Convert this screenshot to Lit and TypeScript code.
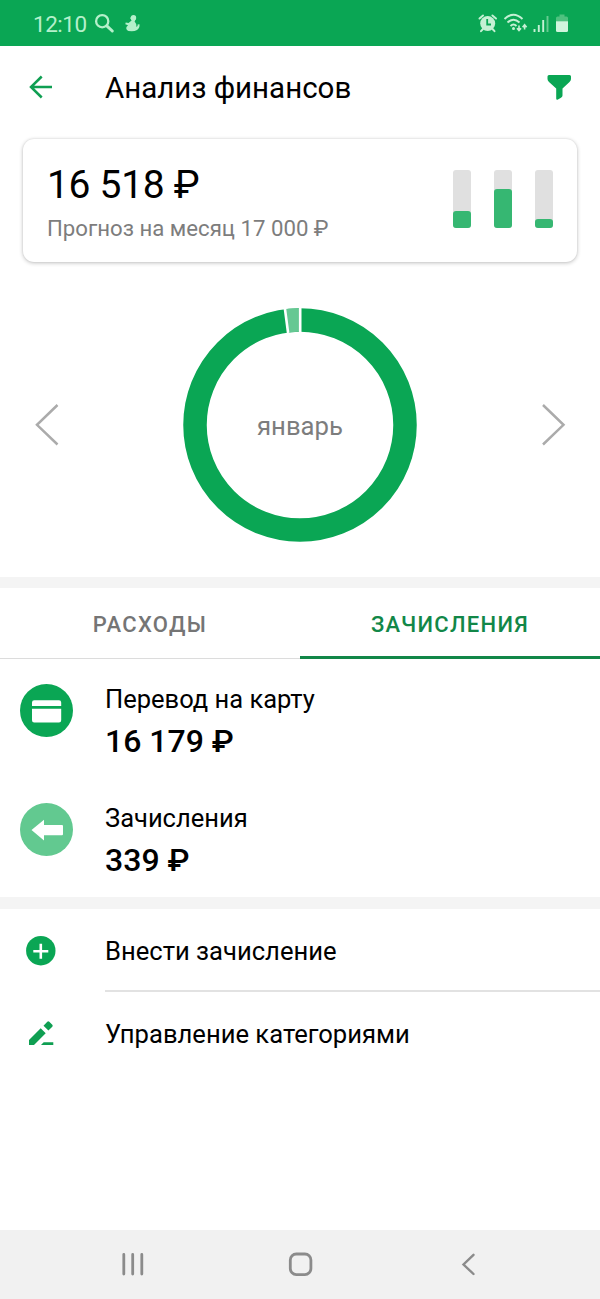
import { LitElement, html, svg, css } from "lit";
import { customElement } from "lit/decorators.js";

const BARS = [17, 39, 9];

@customElement("status-bar")
class StatusBar extends LitElement {
  static styles = css`
    :host { display: flex; height: 46px; background: #0aa654; color: #b5f0cb; align-items: center; }
    .time { font-size: 22.5px; letter-spacing: -0.5px; line-height: 46px; width: 61px; padding-left: 33px; padding-top: 2px; white-space: nowrap; }
    svg { display: block; }
    .right { margin-left: auto; }
  `;
  render() {
    return html`
      <div class="time">12:10</div>
      <svg width="50" height="46" viewBox="94 0 50 46">
        <circle cx="102.200" cy="21.200" r="6.100" fill="none" stroke="#b5f0cb" stroke-width="2.300" />
        <path d="M106.800 25.800 L112.300 31" stroke="#b5f0cb" stroke-width="3" stroke-linecap="round" />
        <circle cx="133.500" cy="17.700" r="2.700" fill="#b5f0cb" />
        <path d="M130 17.800 L134 16.800 L135.800 19 L134.600 21.500 Q137 24 136.500 27 Q138 26.500 137.600 24.600 L139.500 24.300 Q140 28.500 136.500 30.300 Q134.500 31.500 128.500 31 Q125.500 29.500 126.500 27 L128 25.300 L125.300 24.300 L125.700 22.500 L128.500 22.900 L131.600 20.500 Z" fill="#b5f0cb" />
      </svg>
      <svg class="right" width="140" height="46" viewBox="460 0 140 46">
        <circle cx="487.700" cy="23.500" r="7.500" fill="#c5f0d4" />
        <path d="M487.200 19 V24.500 H491" fill="none" stroke="#0aa654" stroke-width="1.800" />
        <path d="M479.500 18.500 L483 15.500 M492.400 15.500 L496 18.500 M483 29 L481 31.200 M492.500 29 L494.500 31.200" stroke="#c5f0d4" stroke-width="2" stroke-linecap="round" />
        <g fill="none" stroke="#c5f0d4" stroke-width="1.900">
          <path d="M504.500 19 Q513.500 10.500 522.500 19" />
          <path d="M507.500 22.500 Q513.500 16.800 519.500 22.500" />
          <path d="M510.500 26 Q513.500 23 516.500 26" />
        </g>
        <circle cx="513.500" cy="28.500" r="1.500" fill="#c5f0d4" />
        <path d="M519 25.500 V30 M517 28.200 L519 30.500 L521 28.200 M524.600 29.500 V25 M522.600 27.200 L524.600 24.700 L526.600 27.200" fill="none" stroke="#c5f0d4" stroke-width="1.600" />
        <path d="M534.500 29 V32 M538.800 25 V32 M543.200 20 V32" stroke="#c5f0d4" stroke-width="1.900" />
        <path d="M547.500 16 V32" stroke="#67cb91" stroke-width="1.900" />
        <path d="M556 21.500 V18 Q556 16.500 557.500 16.500 H559.500 V14.500 H564.500 V16.500 H566.500 Q568 16.500 568 18 V21.500 Z" fill="#4fc17f" />
        <path d="M556 21.300 H568 V30.500 Q568 32 566.500 32 H557.500 Q556 32 556 30.500 Z" fill="#d0f5dd" />
      </svg>
    `;
  }
}

@customElement("forecast-card")
class ForecastCard extends LitElement {
  static styles = css`
    :host { display: flex; box-sizing: border-box; height: 123px; margin: 0 23px; padding: 0 24px;
      border-radius: 11px; background: #fff; justify-content: space-between;
      box-shadow: 0 1px 4px rgba(0,0,0,.24), 0 0 2px rgba(0,0,0,.1); }
    .sum { font-size: 39px; letter-spacing: -0.3px; line-height: 46px; margin-top: 23px; color: #000; white-space: nowrap; }
    .note { font-size: 22.2px; line-height: 30px; margin-top: 5px; color: #7d7d7d; white-space: nowrap; }
    .bars { display: flex; gap: 23px; margin-top: 31px; }
    .bar { width: 18px; height: 58px; border-radius: 3px; background: #e0e0e0; display: flex; align-items: flex-end; }
    .fill { width: 18px; border-radius: 3px; background: #36b772; }
  `;
  render() {
    return html`
      <div>
        <div class="sum">16 518 ₽</div>
        <div class="note">Прогноз на месяц 17 000 ₽</div>
      </div>
      <div class="bars">
        ${BARS.map((h) => html`<div class="bar"><div class="fill" style="height:${h}px"></div></div>`)}
      </div>
    `;
  }
}

const cardIcon = svg`
  <circle cx="26.500" cy="26.500" r="26.500" fill="#0aa654" />
  <path d="M12 22 V18.500 Q12 16.300 14.200 16.300 H39 Q41.200 16.300 41.200 18.500 V22 Z M12 24.800 H41.200 V36.300 Q41.200 38.600 39 38.600 H14.200 Q12 38.600 12 36.300 Z" fill="#fff" />`;

const arrowIcon = svg`
  <circle cx="26.500" cy="26.500" r="26.500" fill="#62c990" />
  <path d="M11.500 27 L24 16.700 V22 H42 Q43 22 43 23 V31 Q43 32.200 42 32.200 H24 V37.500 Z" fill="#fff" />`;

const ENTRIES = [
  { icon: cardIcon, name: "Перевод на карту", sum: "16 179 ₽" },
  { icon: arrowIcon, name: "Зачисления", sum: "339 ₽" },
];

@customElement("app-root")
class AppRoot extends LitElement {
  static styles = css`
    :host { display: flex; flex-direction: column; height: 1299px; background: #fff; overflow: hidden;
      font-family: Roboto, sans-serif; color: #000; }
    svg { display: block; flex: none; }
    .head { display: flex; align-items: center; height: 93px; }
    .back { width: 105px; }
    .title { font-size: 29.5px; line-height: 40px; padding-bottom: 10px; white-space: nowrap; }
    .filter { margin-left: auto; }
    .chart { height: 315px; box-sizing: border-box; padding-top: 10px; display: grid; grid-template-columns: 92px 1fr 92px; align-items: center; }
    .ring { display: grid; justify-items: center; align-items: center; }
    .ring > * { grid-area: 1 / 1; }
    .month { font-size: 25.7px; line-height: 32px; color: #7d7d7d; padding-top: 2px; }
    .sep { height: 11px; background: #f4f4f4; flex: none; }
    .thick { height: 12px; }
    .tabs { display: grid; grid-template-columns: 1fr 1fr; height: 71px; box-sizing: border-box; }
    .tab { display: flex; align-items: center; justify-content: center; font-size: 22px; font-weight: 500;
      letter-spacing: 1.3px; color: #757575; border-bottom: 1px solid #dcdcdc; padding-top: 2px; }
    .active { color: #128748; border-bottom: 3px solid #128748; padding-top: 4px; }
    .entries { height: 238px; }
    .entry { display: flex; height: 119px; box-sizing: border-box; padding: 25px 0 0 20px; }
    .entry .texts { margin-left: 32px; }
    .name { font-size: 25.500px; line-height: 30px; white-space: nowrap; }
    .sum { font-size: 32px; line-height: 40px; margin-top: 7px; font-weight: 500; white-space: nowrap; }
    .action { display: flex; align-items: center; height: 83px; }
    .action svg { width: 105px; }
    .label { flex: 1; height: 83px; line-height: 84px; font-size: 25.600px; box-sizing: border-box; white-space: nowrap; }
    .lined { border-bottom: 2px solid #e2e2e2; }
    .nav { margin-top: auto; height: 69px; background: #f1f1f1; flex: none; }
  `;
  render() {
    return html`
      <status-bar></status-bar>
      <div class="head">
        <svg class="back" width="105" height="93" viewBox="0 46 105 93">
          <path d="M52 87 H31.500 M41.700 76.500 L31 87 L41.700 97.500" fill="none" stroke="#0f9f52" stroke-width="2.500" />
        </svg>
        <div class="title">Анализ финансов</div>
        <svg class="filter" width="60" height="93" viewBox="540 46 60 93">
          <path d="M549 75 H569.500 Q571 75 571 76.500 V79 Q571 80.500 569.500 82 L562.500 88.500 V95.500 Q562.500 97 561 97.800 L557.500 99.700 Q556.200 100 556.200 98.500 V88.500 L549 82 Q547.500 80.500 547.500 79 V76.500 Q547.500 75 549 75 Z" fill="#0aa654" />
        </svg>
      </div>
      <forecast-card></forecast-card>
      <div class="chart">
        <svg width="92" height="60" viewBox="0 395 92 60">
          <path d="M57.500 405 L37 424.800 L57.500 444.500" fill="none" stroke="#ababab" stroke-width="2.500" />
        </svg>
        <div class="ring">
          <svg width="236" height="236" viewBox="-118 -118 236 236">
            <circle r="105" fill="none" stroke="#0aa654" stroke-width="23.500" />
            <path d="M-14.500 -115.900 A116.800 116.800 0 0 1 0 -116.800 V-93.200 A93.200 93.200 0 0 0 -11.600 -92.500 Z" fill="#66c893" />
            <path d="M0.200 -118 V-92 M-15.300 -118 L-11.900 -92" stroke="#fff" stroke-width="2.600" />
          </svg>
          <div class="month">январь</div>
        </div>
        <svg width="92" height="60" viewBox="508 395 92 60">
          <path d="M543 405 L563.500 424.800 L543 444.500" fill="none" stroke="#ababab" stroke-width="2.500" />
        </svg>
      </div>
      <div class="sep"></div>
      <div class="tabs">
        <div class="tab">РАСХОДЫ</div>
        <div class="tab active">ЗАЧИСЛЕНИЯ</div>
      </div>
      <div class="entries">
        ${ENTRIES.map((e) => html`
          <div class="entry">
            <svg width="53" height="53" viewBox="0 0 53 53">${e.icon}</svg>
            <div class="texts">
              <div class="name">${e.name}</div>
              <div class="sum">${e.sum}</div>
            </div>
          </div>`)}
      </div>
      <div class="sep thick"></div>
      <div class="action">
        <svg width="105" height="83" viewBox="0 909 105 83">
          <circle cx="40.800" cy="950.700" r="14.700" fill="#0aa654" />
          <path d="M33.300 951.200 H48.300 M40.800 943.700 V958.700" stroke="#fff" stroke-width="2.600" />
        </svg>
        <div class="label lined">Внести зачисление</div>
      </div>
      <div class="action">
        <svg width="105" height="83" viewBox="0 992 105 83">
          <path d="M29 1045 V1040 L40.700 1028.300 L45.700 1033.300 L34 1045 Z M43.500 1025.700 L47.300 1021.700 Q48.300 1020.700 49.300 1021.700 L52.300 1024.700 Q53.200 1025.700 52.300 1026.700 L48.400 1030.500 Z M43.700 1042.200 H53.300 V1045 H41 Z" fill="#0f9f52" />
        </svg>
        <div class="label">Управление категориями</div>
      </div>
      <svg class="nav" width="600" height="69" viewBox="0 1230 600 69">
        <g fill="none" stroke="#8b8b8b" stroke-width="2.800" stroke-linecap="round">
          <path d="M123.800 1254.500 V1274 M132.700 1254.500 V1274 M141.800 1254.500 V1274" />
          <rect x="290.300" y="1254" width="20.600" height="20.600" rx="6" />
          <path d="M473.500 1254.800 L463.500 1264.500 L473.500 1274" stroke-width="2.400" />
        </g>
      </svg>
    `;
  }
}
